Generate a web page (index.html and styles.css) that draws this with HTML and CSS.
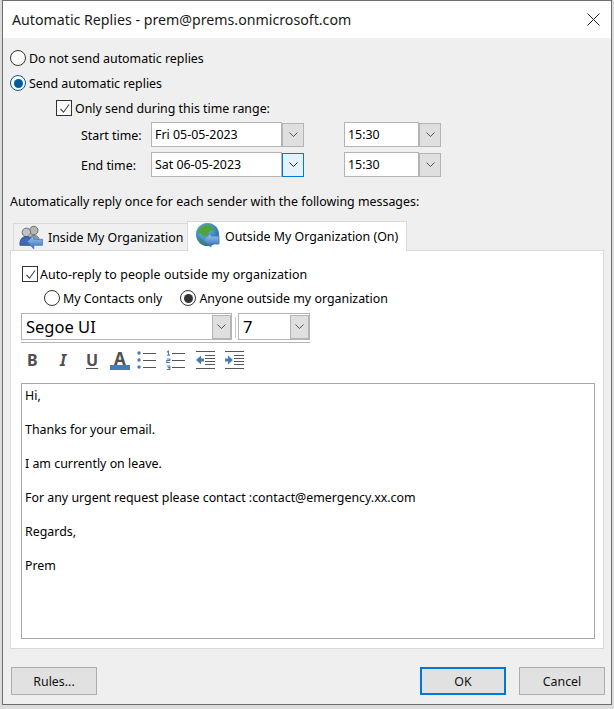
FILE: index.html
```html
<!DOCTYPE html>
<html lang="en">
<head>
<meta charset="utf-8">
<title>Automatic Replies</title>
<link rel="stylesheet" href="styles.css">
</head>
<body>
<div class="window">
  <header class="titlebar">
    <span class="title">Automatic Replies - prem@prems.onmicrosoft.com</span>
    <svg class="close" width="13" height="13" viewBox="0 0 13 13"><path d="M.5.5l12 12M12.5.5l-12 12" stroke="#222" stroke-width="1" fill="none"/></svg>
  </header>
  <main class="content">
    <div class="opt opt-first"><span class="radio"></span><span>Do not send automatic replies</span></div>
    <div class="opt opt-second"><span class="radio radio-blue"></span><span>Send automatic replies</span></div>
    <div class="opt opt-range"><span class="check"><svg width="13" height="13" viewBox="0 0 13 13"><path d="M2.5 7l3 3.2 5.5-7.7" stroke="#444" stroke-width="1.1" fill="none"/></svg></span><span>Only send during this time range:</span></div>

    <div class="timerow timerow-start">
      <span class="timelabel">Start time:</span>
      <div class="combo date"><span class="combo-text">Fri 05-05-2023</span></div>
      <span class="arrow"><svg width="9" height="6" viewBox="0 0 9 6"><path d="M.5.5l4 4 4-4" stroke="#555" fill="none"/></svg></span>
      <div class="combo time"><span class="combo-text">15:30</span></div>
      <span class="arrow"><svg width="9" height="6" viewBox="0 0 9 6"><path d="M.5.5l4 4 4-4" stroke="#555" fill="none"/></svg></span>
    </div>
    <div class="timerow timerow-end">
      <span class="timelabel">End time:</span>
      <div class="combo date"><span class="combo-text">Sat 06-05-2023</span></div>
      <span class="arrow arrow-focus"><svg width="9" height="6" viewBox="0 0 9 6"><path d="M.5.5l4 4 4-4" stroke="#222" fill="none"/></svg></span>
      <div class="combo time"><span class="combo-text">15:30</span></div>
      <span class="arrow"><svg width="9" height="6" viewBox="0 0 9 6"><path d="M.5.5l4 4 4-4" stroke="#555" fill="none"/></svg></span>
    </div>

    <p class="intro">Automatically reply once for each sender with the following messages:</p>

    <div class="tabs">
      <div class="tab tab-inactive">
        <svg class="tabicon-people" width="24" height="24" viewBox="0 0 26 26">
          <defs>
            <linearGradient id="ga" x1="0" y1="0" x2="0" y2="1"><stop offset="0" stop-color="#a8cdf0"/><stop offset="1" stop-color="#2f6db8"/></linearGradient>
          </defs>
          <circle cx="16" cy="6" r="4.6" fill="#b5b5b5" stroke="#666"/>
          <path d="M10 18c0-5 3-7 6-7s6 2 6 6v2H10z" fill="#9a9a9a" stroke="#777"/>
          <circle cx="8" cy="8" r="4.6" fill="#c2c2c2" stroke="#666"/>
          <path d="M1 21c0-6 3-8.500 7-8.500s6 2 6.500 5V22H1z" fill="#3f69b5" stroke="#35538f"/>
          <path d="M9 18l7-6.500v4h9.500V22H16v4z" fill="url(#ga)" stroke="#3a78bd" stroke-width=".8"/>
        </svg>
        <span>Inside My Organization</span>
      </div>
      <div class="tab tab-active">
        <svg class="tabicon-globe" width="24" height="24" viewBox="0 0 24 24">
          <defs>
            <radialGradient id="gb" cx=".4" cy=".35" r=".75"><stop offset="0" stop-color="#6fc6e8"/><stop offset="1" stop-color="#1c5aa0"/></radialGradient>
            <linearGradient id="gc" x1="0" y1="0" x2="0" y2="1"><stop offset="0" stop-color="#a8cdf0"/><stop offset="1" stop-color="#2f6db8"/></linearGradient>
          </defs>
          <circle cx="11.500" cy="11.500" r="11.500" fill="url(#gb)"/>
          <path d="M3 6c3-4 8-5 12-3.500l3 4-5 2.500-1 3.500-5 1-2-3-3-1z" fill="#4fa33a"/>
          <path d="M3 14l4 4 3 4c-3-.5-6-4-7-8z" fill="#3f8f35"/>
          <path d="M7 17l8-7v3h8v8h-8v3z" fill="url(#gc)" stroke="#3a78bd" stroke-width=".8"/>
        </svg>
        <span>Outside My Organization (On)</span>
      </div>
    </div>

    <section class="panel">
      <div class="opt opt-auto"><span class="check"><svg width="13" height="13" viewBox="0 0 13 13"><path d="M2.5 7l3 3.2 5.5-7.700" stroke="#444" stroke-width="1.1" fill="none"/></svg></span><span>Auto-reply to people outside my organization</span></div>
      <div class="scope">
        <div class="opt"><span class="radio"></span><span>My Contacts only</span></div>
        <div class="opt opt-anyone"><span class="radio radio-dark"></span><span>Anyone outside my organization</span></div>
      </div>
      <div class="fontbar">
        <div class="fontbox fontname"><span>Segoe UI</span><span class="arrow arrow-small"><svg width="9" height="6" viewBox="0 0 9 6"><path d="M.5.5l4 4 4-4" stroke="#555" fill="none"/></svg></span></div>
        <span class="fontsep"></span>
        <div class="fontbox fontsize"><span>7</span><span class="arrow arrow-small"><svg width="9" height="6" viewBox="0 0 9 6"><path d="M.5.5l4 4 4-4" stroke="#555" fill="none"/></svg></span></div>
      </div>
      <div class="toolbar">
        <span class="tool tool-b">B</span>
        <span class="tool tool-i">I</span>
        <span class="tool tool-u">U</span>
        <span class="tool tool-a">A</span>
        <svg class="tool-list tool-bullets" width="19" height="20" viewBox="0 0 19 20"><g fill="#4a7ab0"><circle cx="2" cy="3" r="1.700"/><circle cx="2" cy="10" r="1.700"/><circle cx="2" cy="17" r="1.700"/></g><path d="M6 3.500h13M6 10.500h13M6 17.500h13" stroke="#555"/></svg>
        <svg class="tool-list tool-numbers" width="19" height="20" viewBox="0 0 19 20"><g fill="none" stroke="#4a7ab0" stroke-width="1.100"><path d="M1 2l1.500-.8V5M1 5.300h3"/><path d="M.8 9h3v1.500h-3v2h3.200"/><path d="M.8 16h3v1.600h-2h2v2h-3"/></g><path d="M6 3.500h13M6 10.500h13M6 17.500h13" stroke="#555"/></svg>
        <svg class="tool-list tool-outdent" width="19" height="20" viewBox="0 0 19 20"><path d="M0 1.500h19M9 5.500h10M9 8.500h10M9 11.500h10M9 14.500h10M0 18.500h19" stroke="#555"/><path d="M0 10l5-4.500V8.500h3v3H5v3z" fill="#4a7ab0"/></svg>
        <svg class="tool-list tool-indent" width="19" height="20" viewBox="0 0 19 20"><path d="M0 1.500h19M9 5.500h10M9 8.500h10M9 11.500h10M9 14.500h10M0 18.500h19" stroke="#555"/><path d="M8 10L3 5.500V8.500H0v3h3v3z" fill="#4a7ab0"/></svg>
      </div>
      <div class="message">
        <p>Hi,</p>
        <p>Thanks for your email.</p>
        <p>I am currently on leave.</p>
        <p>For any urgent request please contact :contact@emergency.xx.com</p>
        <p>Regards,</p>
        <p>Prem</p>
      </div>
    </section>

    <footer class="footer">
      <button class="btn btn-rules" type="button">Rules...</button>
      <button class="btn btn-ok" type="button">OK</button>
      <button class="btn btn-cancel" type="button">Cancel</button>
    </footer>
  </main>
</div>
</body>
</html>
```

FILE: styles.css
```css
* { box-sizing: border-box; }
html, body { margin: 0; padding: 0; }
body {
  width: 614px;
  height: 709px;
  overflow: hidden;
  background: #dcdcdc;
  padding-left: 2px;
  font-family: "Noto Sans", "Open Sans", sans-serif;
  font-size: 12.4px;
  color: #000;
}
.window {
  width: 610px;
  height: 705px;
  border: 1px solid #6e6e6e;
  background: #efefef;
  display: flex;
  flex-direction: column;
}
.titlebar {
  height: 37px;
  flex: none;
  background: #fff;
  display: flex;
  align-items: center;
  justify-content: space-between;
  padding: 0 11px 0 9px;
  font-size: 14.2px;
  color: #1a1a1a;
}
.content {
  flex: 1;
  padding: 0 4px 0 7px;
  display: flex;
  flex-direction: column;
}
.opt {
  display: flex;
  align-items: center;
  height: 18px;
  gap: 3px;
  white-space: nowrap;
}
.opt-first { margin-top: 11px; }
.opt-second { margin-top: 7px; }
.opt-range { margin-top: 7px; margin-left: 46px; }
.radio {
  width: 16px;
  height: 16px;
  flex: none;
  border: 1px solid #333;
  border-radius: 50%;
  background: #fff;
  position: relative;
}
.radio-blue { border-color: #005a9e; }
.radio-blue::after, .radio-dark::after {
  content: "";
  position: absolute;
  inset: 2.5px;
  border-radius: 50%;
  background: #005a9e;
}
.radio-dark::after { background: #333; }
.check {
  width: 16px;
  height: 16px;
  flex: none;
  border: 1px solid #333;
  background: #fff;
  display: flex;
  align-items: center;
  justify-content: center;
}
.timerow {
  display: flex;
  align-items: center;
  height: 25px;
  margin-left: 71px;
}
.timerow-start { margin-top: 5px; }
.timerow-end { margin-top: 5px; }
.timelabel { width: 70px; flex: none; padding-top: 2px; }
.combo {
  height: 25px;
  border: 1px solid #b4b4b4;
  background: #fff;
  display: flex;
  align-items: center;
  padding-left: 3px;
  flex: none;
}
.date { width: 131px; }
.time { width: 75px; margin-left: 40px; }
.arrow {
  width: 22px;
  height: 24px;
  flex: none;
  border: 1px solid #b4b4b4;
  background: #dfdfdf;
  display: flex;
  align-items: center;
  justify-content: center;
}
.arrow-focus { border-color: #0078d7; background: #e5f1fb; }
.intro { margin: 16px 0 0; height: 18px; line-height: 18px; white-space: nowrap; }
.tabs {
  margin-top: 10px;
  margin-left: 3px;
  height: 30px;
  margin-bottom: -1px;
  display: flex;
  align-items: flex-start;
  position: relative;
  z-index: 1;
}
.tab {
  display: flex;
  align-items: center;
  white-space: nowrap;
  border: 1px solid #d9d9d9;
}
.tab-inactive {
  width: 175px;
  height: 28px;
  margin-top: 2px;
  background: #f0f0f0;
  padding-left: 5px;
  gap: 5px;
}
.tab-active {
  width: 220px;
  height: 30px;
  margin-left: -1px;
  background: #fff;
  border-bottom: 0;
  padding-left: 8px;
  gap: 5px;
}
.tabicon-globe { margin-bottom: 3px; flex: none; }
.panel {
  width: 594px;
  height: 399px;
  background: #fff;
  border: 1px solid #d9d9d9;
  padding: 0 8px 0 10px;
  display: flex;
  flex-direction: column;
}
.opt-auto { margin-top: 14px; margin-left: 1px; gap: 2px; letter-spacing: .09px; }
.scope {
  display: flex;
  margin-top: 6px;
  margin-left: 23px;
}
.opt-anyone { margin-left: 18px; }
.fontbar {
  width: 289px;
  height: 30px;
  margin-top: 6px;
  display: flex;
  align-items: flex-start;
  border-bottom: 1px solid #b4b4b4;
}
.fontbox {
  height: 27px;
  border: 1px solid #b4b4b4;
  display: flex;
  align-items: center;
  justify-content: space-between;
  padding-left: 4px;
  font-size: 16.5px;
  flex: none;
}
.fontname { width: 211px; }
.fontsize { width: 72px; }
.fontsep { width: 1px; height: 21px; margin: 4px 2px 0 3px; background: #c8c8c8; flex: none; }
.arrow-small { width: 19px; height: 24px; margin-right: 0; }
.toolbar {
  height: 40px;
  display: flex;
  align-items: center;
  padding-bottom: 6px;
}
.tool {
  font-weight: 700;
  font-size: 16px;
  color: #505050;
  line-height: 20px;
  flex: none;
}
.tool-b { margin-left: 6px; width: 32px; }
.tool-i { width: 27px; font-style: italic; padding-left: 1px; }
.tool-u { width: 24px; text-decoration: underline; text-underline-offset: 2px; }
.tool-a {
  width: 20px;
  text-align: center;
  height: 20px;
  position: relative;
  font-size: 17px;
  line-height: 17px;
}
.tool-a::after {
  content: "";
  position: absolute;
  left: 0;
  right: 0;
  bottom: 0;
  height: 5px;
  background: #4a7ab0;
}
.tool-list { flex: none; }
.tool-bullets { margin-left: 7px; }
.tool-numbers { margin-left: 10px; }
.tool-outdent { margin-left: 11px; }
.tool-indent { margin-left: 10px; }
.message {
  width: 574px;
  height: 256px;
  border: 1px solid #a9a9a9;
  background: #fff;
  padding: 3px 3px;
  line-height: 17px;
}
.message p { margin: 0 0 17px; }
.footer {
  display: flex;
  margin-top: 18px;
  margin-left: 1px;
}
.btn {
  width: 86px;
  height: 28px;
  border: 1px solid #adadad;
  background: #e1e1e1;
  font: inherit;
  color: #111;
  padding: 0;
}
.btn-ok {
  width: 86px;
  margin-left: 323px;
  border: 2px solid #0078d7;
}
.btn-cancel { margin-left: 13px; }
```
